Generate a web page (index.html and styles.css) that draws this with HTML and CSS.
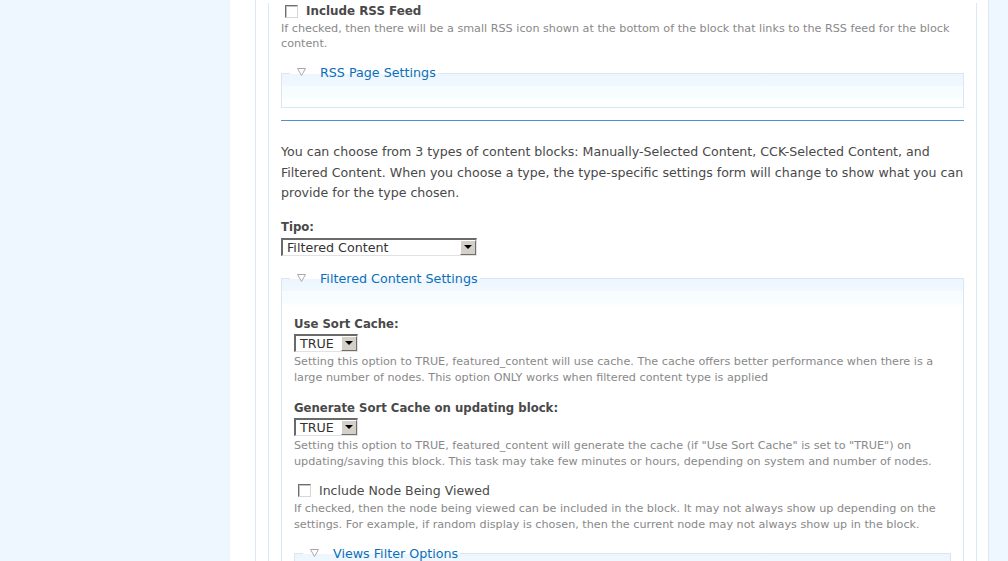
FILE: index.html
```html
<!DOCTYPE html>
<html lang="en">
<head>
  <meta charset="UTF-8">
  <title>Block settings</title>
  <link rel="stylesheet" href="styles.css">
</head>
<body>
  <div class="page">
    <div class="sidebar"></div>
    <div class="main">
      <div class="outer">
        <div class="inner">

          <div class="form-item first">
            <label class="option strong"><span class="checkbox"></span>Include RSS Feed</label>
            <div class="description">If checked, then there will be a small RSS icon shown at the bottom of the block that links to the RSS feed for the block content.</div>
          </div>

          <fieldset class="collapsible rss">
            <legend><svg class="arrow" width="9" height="8" viewBox="0 0 9 8"><polygon points="0.5,0.5 8.5,0.5 4.5,7.5" fill="#fff" stroke="#a9a9a9"/></svg><a href="#">RSS Page Settings</a></legend>
            <div class="rss-body"></div>
          </fieldset>

          <hr class="divider">

          <p class="intro">You can choose from 3 types of content blocks: Manually-Selected Content, CCK-Selected Content, and Filtered Content. When you choose a type, the type-specific settings form will change to show what you can provide for the type chosen.</p>

          <div class="form-item tipo">
            <label class="field-label">Tipo:</label>
            <div class="select wide"><span class="select-value">Filtered Content</span><span class="select-button"><i></i></span></div>
          </div>

          <fieldset class="collapsible filtered">
            <legend><svg class="arrow" width="9" height="8" viewBox="0 0 9 8"><polygon points="0.5,0.5 8.5,0.5 4.5,7.5" fill="#fff" stroke="#a9a9a9"/></svg><a href="#">Filtered Content Settings</a></legend>
            <div class="fs-body">

              <div class="form-item top">
                <label class="field-label">Use Sort Cache:</label>
                <div class="select small"><span class="select-value">TRUE</span><span class="select-button"><i></i></span></div>
                <div class="description">Setting this option to TRUE, featured_content will use cache. The cache offers better performance when there is a large number of nodes. This option ONLY works when filtered content type is applied</div>
              </div>

              <div class="form-item">
                <label class="field-label">Generate Sort Cache on updating block:</label>
                <div class="select small"><span class="select-value">TRUE</span><span class="select-button"><i></i></span></div>
                <div class="description">Setting this option to TRUE, featured_content will generate the cache (if "Use Sort Cache" is set to "TRUE") on updating/saving this block. This task may take few minutes or hours, depending on system and number of nodes.</div>
              </div>

              <div class="form-item node">
                <label class="option"><span class="checkbox"></span>Include Node Being Viewed</label>
                <div class="description">If checked, then the node being viewed can be included in the block. It may not always show up depending on the settings. For example, if random display is chosen, then the current node may not always show up in the block.</div>
              </div>

              <fieldset class="collapsible views">
                <legend><svg class="arrow" width="9" height="8" viewBox="0 0 9 8"><polygon points="0.5,0.5 8.5,0.5 4.5,7.5" fill="#fff" stroke="#a9a9a9"/></svg><a href="#">Views Filter Options</a></legend>
                <div class="views-body"></div>
              </fieldset>

            </div>
          </fieldset>

        </div>
      </div>
    </div>
  </div>
</body>
</html>
```

FILE: styles.css
```css
* {
  box-sizing: border-box;
}
body {
  margin: 0;
  background: #eef6ff;
  font-family: "DejaVu Sans", Verdana, sans-serif;
  color: #494949;
  overflow: hidden;
}
.page {
  display: flex;
  height: 561px;
}
.sidebar {
  width: 230px;
}
.main {
  width: 759px;
  background: #fff;
  padding-left: 25px;
  display: flex;
}
.outer {
  flex: 1;
  border-left: 1px solid #dce9f4;
  border-right: 1px solid #dce9f4;
  padding: 0 11px 0 12px;
}
.inner {
  height: 100%;
  border-left: 1px solid #dce9f4;
  border-right: 1px solid #dce9f4;
  padding: 0 12px;
}

/* form items */
.form-item {
  margin-top: 14.5px;
}
.form-item.first {
  margin-top: 3px;
}
.form-item.first .description {
  margin-top: 1.5px;
}
.form-item.tipo {
  margin-top: 15px;
}
.form-item.top {
  margin-top: 0;
}
.form-item.node {
  margin-top: 13.5px;
}
.field-label {
  display: block;
  font-size: 11.7px;
  font-weight: bold;
  line-height: 16px;
}
.option {
  display: flex;
  align-items: center;
  font-size: 12.5px;
  line-height: 16px;
}
.option.strong {
  font-weight: bold;
  font-size: 11.9px;
}
.checkbox {
  width: 13px;
  height: 13px;
  margin: 0 8px 0 4px;
  border: 1px solid;
  border-color: #6e6e6e #d6d6d6 #d6d6d6 #6e6e6e;
  box-shadow: inset 1px 1px 0 #c4c4c4;
  background: #fff;
}
.description {
  font-size: 11.2px;
  line-height: 15.5px;
  color: #898989;
  margin-top: 2.5px;
}

/* fake selects */
.select {
  display: flex;
  height: 18px;
  margin-top: 2px;
  border-style: solid;
  border-width: 2px 1px 1px 2px;
  border-color: #6a6a6a #e2e2e2 #e2e2e2 #6a6a6a;
  background: #fff;
  font-size: 12.7px;
  color: #333;
}
.form-item.tipo .select {
  margin-top: 3px;
}
.select.wide {
  width: 196px;
}
.select.small {
  width: 64px;
}
.select-value {
  flex: 1;
  padding-left: 4px;
  line-height: 15px;
}
.select-button {
  width: 16px;
  height: 15px;
  background: #d4d0c8;
  border: 1px solid;
  border-color: #fff #6f6f6f #6f6f6f #fff;
  display: flex;
  align-items: center;
  justify-content: center;
}
.select-button i {
  width: 0;
  height: 0;
  border-left: 4px solid transparent;
  border-right: 4px solid transparent;
  border-top: 4px solid #000;
}

/* fieldsets */
fieldset.collapsible {
  margin: 13.5px 0 0;
  padding: 0 12px;
  min-width: 0;
  border: 1px solid #d8e7f2;
  background: linear-gradient(#edf5fe 0, #f1f8ff 12px, #f6fcff 12px, #f8fdff 25px, #fff 26px);
}
fieldset.filtered {
  margin-top: 15px;
}
legend {
  margin-left: -4px;
  padding: 0 2px 0 7px;
  font-size: 12.7px;
  line-height: 16px;
}
legend .arrow {
  margin-right: 14px;
  vertical-align: 1px;
}
legend a {
  color: #0a6fba;
  text-decoration: none;
}
.rss-body {
  height: 26px;
}
.fs-body {
  padding-top: 29px;
}
.views-body {
  height: 30px;
}
.divider {
  border: 0;
  height: 1px;
  margin: 12px 0 0;
  background: #4c92cf;
}
.intro {
  margin: 21px 0 0;
  font-size: 12.6px;
  line-height: 20.5px;
}
```
